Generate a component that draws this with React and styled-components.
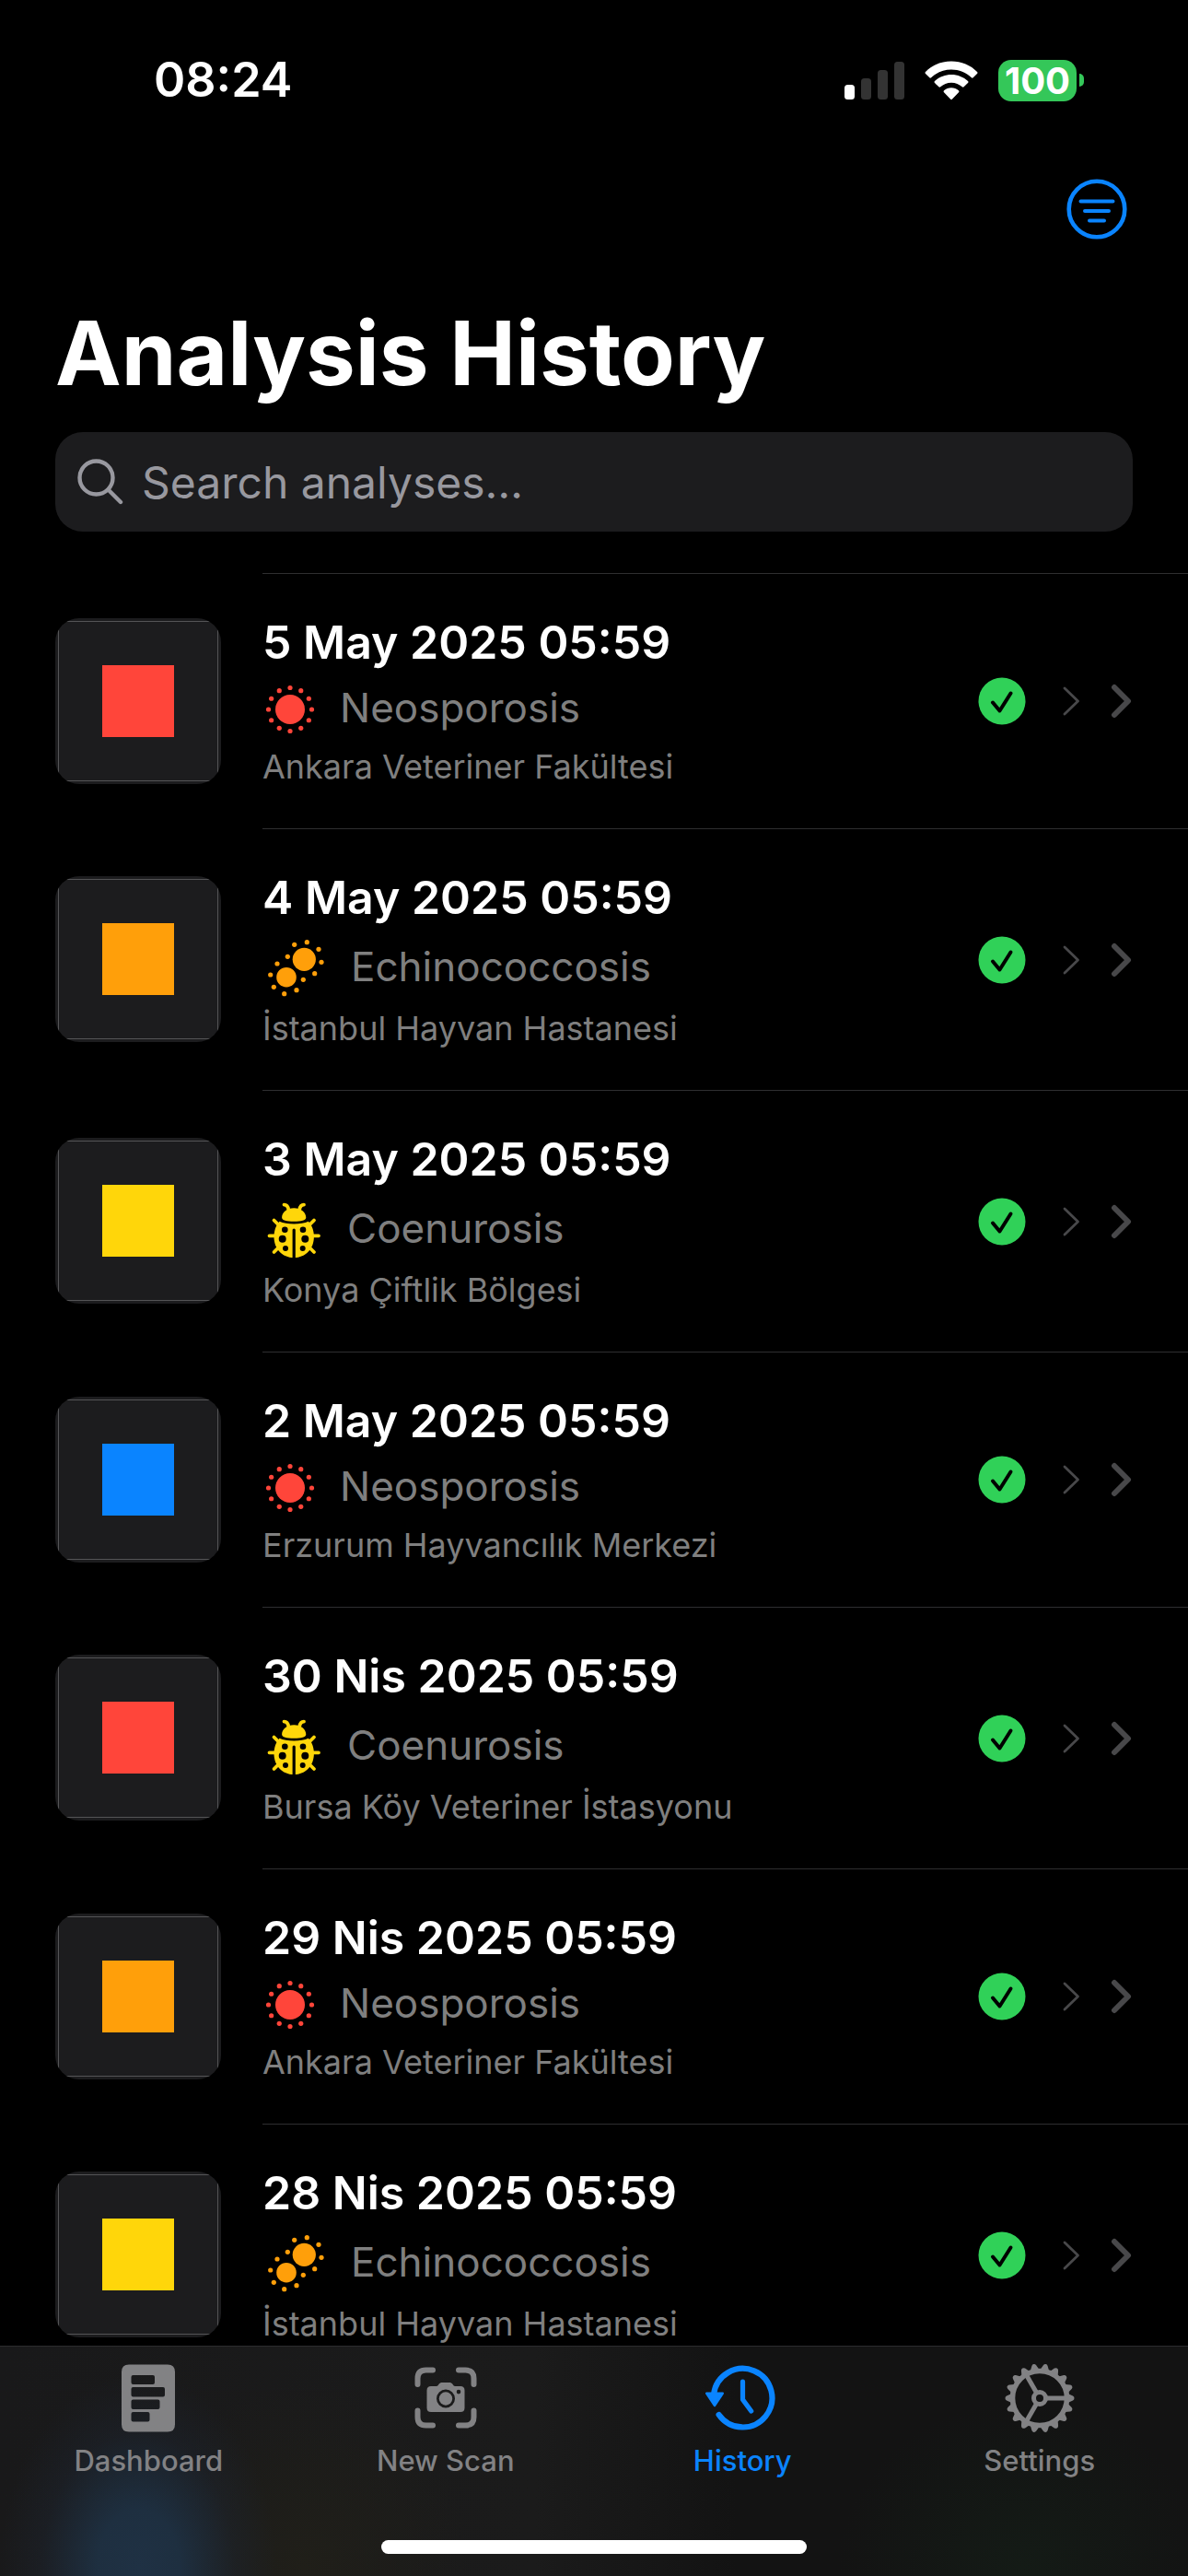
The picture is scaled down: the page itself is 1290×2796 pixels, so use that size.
import React from "react";
import styled, { createGlobalStyle } from "styled-components";

const Global = createGlobalStyle`
  *, *::before, *::after { box-sizing: border-box; }
  html, body { margin: 0; background: #000; }
  body { font-family: Inter, "Liberation Sans", sans-serif; color: #fff; }
  button, input { font: inherit; }
`;

const Screen = styled.div`
  display: flex;
  flex-direction: column;
  height: 100vh;
  background: #000;
  overflow: hidden;
`;

const StatusBar = styled.div`
  display: flex;
  justify-content: space-between;
  align-items: center;
  height: 174px;
  padding: 0 113px 0 167px;
`;

const Clock = styled.time`
  font-size: 52px;
  line-height: 60px;
  font-weight: 600;
`;

const StatusIcons = styled.div`
  display: flex;
  align-items: center;
  gap: 22px;
`;

const Battery = styled.div`
  display: flex;
  align-items: center;
  gap: 3px;
`;

const BatteryBody = styled.span`
  display: flex;
  align-items: center;
  justify-content: center;
  width: 85px;
  height: 45px;
  border-radius: 14px;
  background: #34c759;
  font-size: 40px;
  line-height: 45px;
  font-weight: 700;
`;

const BatteryTip = styled.span`
  width: 5px;
  height: 14px;
  border-radius: 0 5px 5px 0;
  background: #34c759;
`;

const Toolbar = styled.div`
  display: flex;
  justify-content: flex-end;
  padding: 20px 66px 0;
`;

const IconButton = styled.button`
  display: flex;
  padding: 0;
  border: 0;
  background: none;
  color: #0a84ff;
`;

const Title = styled.h1`
  margin: 63px 60px 0;
  font-size: 96px;
  line-height: 120px;
  font-weight: 700;
`;

const Search = styled.label`
  display: flex;
  align-items: center;
  gap: 20px;
  height: 108px;
  margin: 26px 60px 45px;
  padding: 0 24px;
  border-radius: 30px;
  background: #1c1c1e;
  color: #98989f;
`;

const SearchInput = styled.input`
  flex: 1;
  min-width: 0;
  height: 60px;
  padding: 0;
  border: 0;
  outline: 0;
  background: none;
  color: #fff;
  font-size: 48px;
  &::placeholder { color: #98989f; opacity: 1; }
`;

const List = styled.ul`
  flex: 1;
  min-height: 0;
  margin: 0;
  padding: 0;
  list-style: none;
  overflow-y: auto;
  scrollbar-width: none;
`;

const Row = styled.li`
  display: flex;
  align-items: center;
  gap: 45px;
  padding-left: 60px;
`;

const Thumb = styled.div`
  display: flex;
  flex: none;
  padding: 3px;
  width: 180px;
  height: 180px;
  border-radius: 26px;
  background: #1c1c1e;
  overflow: hidden;
`;

const ThumbFrame = styled.div`
  display: flex;
  flex: 1;
  align-items: center;
  justify-content: center;
  border: 1px solid #545456;
`;

const Swatch = styled.span`
  width: 78px;
  height: 78px;
  background: ${(p) => p.$color};
`;

const RowBody = styled.div`
  display: flex;
  flex: 1;
  min-width: 0;
  align-items: center;
  justify-content: space-between;
  padding: 43px 60px 43px 0;
  border-top: 1px solid #2e2e30;
`;

const Texts = styled.div`
  display: flex;
  flex-direction: column;
  gap: 10px;
`;

const DateLine = styled.h2`
  margin: 0;
  font-size: 50px;
  line-height: 62px;
  font-weight: 600;
`;

const Diagnosis = styled.div`
  display: flex;
  align-items: center;
  gap: 24px;
  font-size: 44px;
  line-height: 60px;
  color: #7f7f7f;
`;

const Place = styled.div`
  font-size: 36px;
  line-height: 48px;
  color: #7f7f7f;
`;

const Marks = styled.div`
  display: flex;
  align-items: center;
  gap: 33px;
`;

const TabBar = styled.nav`
  flex: none;
  display: flex;
  flex-direction: column;
  align-items: center;
  justify-content: space-between;
  height: 250px;
  padding-bottom: 24px;
  border-top: 1px solid #2c2c2e;
  background:
    radial-gradient(ellipse 150px 210px at 150px 240px, #1f3144 0%, #1e2f40 30%, rgba(30, 38, 50, 0.4) 70%, rgba(30, 38, 50, 0) 100%),
    radial-gradient(ellipse 180px 200px at 330px 240px, #201f19 0%, rgba(32, 31, 25, 0) 100%),
    radial-gradient(ellipse 200px 180px at 1110px 240px, #141b16 0%, rgba(20, 27, 22, 0) 100%),
    linear-gradient(90deg, #19191a 0%, #1b1b1b 45%, #131313 62%, #131313 100%);
`;

const Tabs = styled.div`
  display: grid;
  grid-template-columns: repeat(4, 1fr);
  width: 100%;
`;

const Tab = styled.a`
  display: flex;
  flex-direction: column;
  align-items: center;
  gap: 10px;
  padding-top: 18px;
  font-size: 31px;
  line-height: 40px;
  font-weight: 500;
  text-decoration: none;
  color: ${(p) => (p.$active ? "#0a84ff" : "#828284")};
`;

const HomeIndicator = styled.div`
  width: 462px;
  height: 15px;
  border-radius: 8px;
  background: #fff;
`;

const SignalIcon = () => (
  <svg width="65" height="43" viewBox="0 0 65 43" aria-hidden="true">
    <rect x="0" y="26" width="11" height="16" rx="3.5" fill="#fff" />
    <rect x="18" y="19" width="11" height="23" rx="3.5" fill="#333" />
    <rect x="36" y="10" width="11" height="32" rx="3.5" fill="#333" />
    <rect x="54" y="1" width="11" height="41" rx="3.5" fill="#333" />
  </svg>
);

const WifiIcon = () => (
  <svg width="58" height="43" viewBox="0 0 58 43" aria-hidden="true">
    <g fill="#fff">
      <path d="M29 0.500C40 0.500 50 4.700 57 12q1 1 0 2l-4.300 4.200q-0.900 0.900-1.800 0C45 12.700 37.300 9.500 29 9.500S13 12.700 7.100 18.200q-0.900 0.900-1.800 0L1 14q-1-1 0-2C8 4.700 18 0.500 29 0.500Z" />
      <path d="M29 15c7 0 13.300 2.700 18 7q1 1 0 2l-4.400 4.300q-0.900 0.800-1.800 0C37.600 25.400 33.500 23.700 29 23.700s-8.600 1.700-11.800 4.600q-0.900 0.800-1.800 0L11 24q-1-1 0-2c4.700-4.300 11-7 18-7Z" />
      <path d="M29 29.200c3 0 5.800 1.200 8 3.100q1 0.900 0 1.900l-7 7.200q-1 1-2 0l-7-7.200q-1-1 0-1.900c2.200-1.900 5-3.100 8-3.100Z" />
    </g>
  </svg>
);

const FilterIcon = () => (
  <svg width="66" height="66" viewBox="0 0 66 66" fill="none" stroke="currentColor" strokeLinecap="round" aria-hidden="true">
    <circle cx="33" cy="33" r="30.300" strokeWidth="4.600" />
    <path d="M15.500 24.500h35M20 35h26M25 45.500h16" strokeWidth="4" />
  </svg>
);

const SearchIcon = () => (
  <svg width="50" height="50" viewBox="0 0 50 50" fill="none" stroke="currentColor" strokeWidth="4.400" strokeLinecap="round" aria-hidden="true">
    <circle cx="20.500" cy="20.500" r="18" />
    <path d="M33.500 33.500L47 47" />
  </svg>
);

const SunGerm = () => (
  <svg width="60" height="60" viewBox="0 0 60 60" fill="#ff453a" aria-hidden="true">
    <circle cx="30" cy="32" r="16" />
    {Array.from({ length: 12 }, (_, i) => {
      const a = (i * Math.PI) / 6;
      return <circle key={i} cx={30 + 23.5 * Math.cos(a)} cy={32 + 23.5 * Math.sin(a)} r="2.600" />;
    })}
  </svg>
);

const TWIN_DOTS = [
  [48.3, 7.7], [34.7, 10.3], [61, 15.3], [27.3, 23.3], [64, 29.3], [16, 31],
  [56.7, 41.7], [8.7, 43], [44.3, 48.3], [12.3, 56.3], [37, 59.7], [23.7, 63.7],
];

const TwinGerm = () => (
  <svg width="72" height="67" viewBox="0 0 72 67" fill="#ff9f0a" aria-hidden="true">
    <circle cx="45.300" cy="26.300" r="12.600" />
    <circle cx="26" cy="45.700" r="10.800" />
    {TWIN_DOTS.map(([x, y]) => <circle key={x} cx={x} cy={y} r="2.600" />)}
  </svg>
);

const BUG_SPOTS = [
  [24.3, 35.7, 3.3], [44, 35.7, 3.3], [21.7, 45.7, 4], [46.3, 45.7, 4], [25, 56, 3], [43.7, 56, 3],
];

const Ladybug = () => (
  <svg width="68" height="67" viewBox="0 0 68 67" aria-hidden="true">
    <path
      d="M23.500 8.600Q27.500 8.600 28.300 14M45 8.600Q41 8.600 40.200 14M12.500 25.500L18 31M56 25.500L50.500 31M7.500 42.300H15M61 42.300H53.500M12.500 60L18 54.500M56 60L50.500 54.500"
      fill="none" stroke="#ffd60a" strokeWidth="3.800" strokeLinecap="round"
    />
    <path d="M34.200 12.200c7.500 0 13.100 4.600 13.100 10.300 0 3-5 4.200-13.100 4.200s-13.100-1.200-13.100-4.200c0-5.700 5.600-10.300 13.100-10.300Z" fill="#ffd60a" />
    <path d="M18.500 26.800c4 1.800 9.700 2.600 15.700 2.600s11.700-0.800 15.700-2.600c4 4.200 6 10.200 6 16.600 0 12.700-8.700 22.600-21.700 22.600S12.500 56.100 12.500 43.400c0-6.400 2-12.400 6-16.600Z" fill="#ffd60a" />
    <path d="M34.200 36v32" stroke="#000" strokeWidth="3.200" strokeLinecap="round" />
    {BUG_SPOTS.map(([x, y, r]) => <circle key={x} cx={x} cy={y} r={r} fill="#000" />)}
  </svg>
);

const CheckBadge = () => (
  <svg width="52" height="52" viewBox="0 0 52 52" aria-hidden="true">
    <circle cx="26" cy="26" r="25.500" fill="#30d158" />
    <path d="M16 27.500L23.500 36.500L35.500 17.500" fill="none" stroke="#000" strokeWidth="4" strokeLinecap="round" strokeLinejoin="round" />
  </svg>
);

const ThinChevron = () => (
  <svg width="26" height="34" viewBox="0 0 26 34" fill="none" stroke="#48484a" strokeWidth="2.800" strokeLinecap="round" strokeLinejoin="round" aria-hidden="true">
    <path d="M9 3L23.500 17L9 31" />
  </svg>
);

const BoldChevron = () => (
  <svg width="24" height="38" viewBox="0 0 24 38" fill="none" stroke="#48484a" strokeWidth="6" strokeLinecap="round" strokeLinejoin="round" aria-hidden="true">
    <path d="M4 4L19 19L4 34" />
  </svg>
);

const DashboardIcon = () => (
  <svg width="76" height="76" viewBox="0 0 76 76" aria-hidden="true">
    <path
      fillRule="evenodd" fill="currentColor"
      d="M17 1.500H59Q67 1.500 67 9.500V66.500Q67 74.500 59 74.500H17Q9 74.500 9 66.500V9.500Q9 1.500 17 1.500ZM21.500 13Q19.500 13 19.500 15V21Q19.500 23 21.500 23H43Q45 23 45 21V15Q45 13 43 13ZM21.500 26Q19.500 26 19.500 28V34.500Q19.500 36.500 21.500 36.500H54Q56 36.500 56 34.500V28Q56 26 54 26ZM21.500 39.500Q19.500 39.500 19.500 41.500V48Q19.500 50 21.500 50H48.500Q50.500 50 50.500 48V41.500Q50.500 39.500 48.500 39.500ZM21.500 53Q19.500 53 19.500 55V61.500Q19.500 63.500 21.500 63.500H37.500Q39.500 63.500 39.500 61.500V55Q39.500 53 37.500 53Z"
    />
  </svg>
);

const ScanIcon = () => (
  <svg width="76" height="76" viewBox="0 0 76 76" aria-hidden="true">
    <path
      d="M7.500 23V16.500Q7.500 7.500 16.500 7.500H24M52 7.500H59.500Q68.500 7.500 68.500 16.500V23M68.500 51.500V58.500Q68.500 67.500 59.500 67.500H52M24 67.500H16.500Q7.500 67.500 7.500 58.500V51.500"
      fill="none" stroke="currentColor" strokeWidth="6" strokeLinecap="round"
    />
    <path
      fillRule="evenodd" fill="currentColor"
      d="M22 25H28C30 25 30.500 21 33.500 21H42.500C45.500 21 46 25 48 25H54Q58.500 25 58.500 29.500V48.500Q58.500 53 54 53H22Q17.500 53 17.500 48.500V29.500Q17.500 25 22 25ZM38 28.500A10 10 0 1 0 38 48.500A10 10 0 1 0 38 28.500ZM52 28.800A2.300 2.300 0 1 0 52 33.400A2.300 2.300 0 1 0 52 28.800Z"
    />
    <circle cx="38" cy="38.500" r="7.200" fill="currentColor" />
  </svg>
);

const HistoryIcon = () => (
  <svg width="80" height="76" viewBox="0 0 80 76" fill="none" stroke="currentColor" strokeLinecap="round" strokeLinejoin="round" aria-hidden="true">
    <path d="M9 34A31.800 31.800 0 1 1 14.600 56" strokeWidth="6.200" />
    <path d="M40.500 20V39.500L49.700 52" strokeWidth="5.200" />
    <path d="M1.200 32.800H18.800L10 46Z" fill="currentColor" strokeWidth="2.400" />
  </svg>
);

const GearIcon = () => (
  <svg width="76" height="76" viewBox="0 0 76 76" fill="none" stroke="currentColor" aria-hidden="true">
    <circle cx="38" cy="38" r="29.500" strokeWidth="5.600" />
    <circle cx="38" cy="38" r="6.500" strokeWidth="5" />
    {[0, 120, 240].map((a) => (
      <path key={a} d="M45 38H66" strokeWidth="5" transform={`rotate(${a} 38 38)`} />
    ))}
    {Array.from({ length: 18 }, (_, i) => (
      <path key={i} d="M69 33.200L74 35.600Q75.500 36.400 75.500 38Q75.500 39.600 74 40.400L69 42.800Z" fill="currentColor" stroke="none" transform={`rotate(${i * 20} 38 38)`} />
    ))}
  </svg>
);

const DISEASES = {
  Neosporosis: SunGerm,
  Echinococcosis: TwinGerm,
  Coenurosis: Ladybug,
};

const ANALYSES = [
  { date: "5 May 2025 05:59", disease: "Neosporosis", place: "Ankara Veteriner Fakültesi", color: "#ff453a" },
  { date: "4 May 2025 05:59", disease: "Echinococcosis", place: "İstanbul Hayvan Hastanesi", color: "#ff9f0a" },
  { date: "3 May 2025 05:59", disease: "Coenurosis", place: "Konya Çiftlik Bölgesi", color: "#ffd60a" },
  { date: "2 May 2025 05:59", disease: "Neosporosis", place: "Erzurum Hayvancılık Merkezi", color: "#0a84ff" },
  { date: "30 Nis 2025 05:59", disease: "Coenurosis", place: "Bursa Köy Veteriner İstasyonu", color: "#ff453a" },
  { date: "29 Nis 2025 05:59", disease: "Neosporosis", place: "Ankara Veteriner Fakültesi", color: "#ff9f0a" },
  { date: "28 Nis 2025 05:59", disease: "Echinococcosis", place: "İstanbul Hayvan Hastanesi", color: "#ffd60a" },
];

const TABS = [
  { label: "Dashboard", Icon: DashboardIcon },
  { label: "New Scan", Icon: ScanIcon },
  { label: "History", Icon: HistoryIcon, active: true },
  { label: "Settings", Icon: GearIcon },
];

export default function App() {
  return (
    <Screen>
      <Global />
      <StatusBar>
        <Clock>08:24</Clock>
        <StatusIcons>
          <SignalIcon />
          <WifiIcon />
          <Battery>
            <BatteryBody>100</BatteryBody>
            <BatteryTip />
          </Battery>
        </StatusIcons>
      </StatusBar>
      <Toolbar>
        <IconButton type="button" aria-label="Filter"><FilterIcon /></IconButton>
      </Toolbar>
      <Title>Analysis History</Title>
      <Search>
        <SearchIcon />
        <SearchInput type="text" placeholder="Search analyses…" aria-label="Search analyses" />
      </Search>
      <List>
        {ANALYSES.map(({ date, disease, place, color }) => {
          const Germ = DISEASES[disease];
          return (
            <Row key={date}>
              <Thumb><ThumbFrame><Swatch $color={color} /></ThumbFrame></Thumb>
              <RowBody>
                <Texts>
                  <DateLine>{date}</DateLine>
                  <Diagnosis><Germ />{disease}</Diagnosis>
                  <Place>{place}</Place>
                </Texts>
                <Marks>
                  <CheckBadge />
                  <ThinChevron />
                  <BoldChevron />
                </Marks>
              </RowBody>
            </Row>
          );
        })}
      </List>
      <TabBar>
        <Tabs>
          {TABS.map(({ label, Icon, active }) => (
            <Tab key={label} href={`#${label}`} $active={active}>
              <Icon />
              {label}
            </Tab>
          ))}
        </Tabs>
        <HomeIndicator />
      </TabBar>
    </Screen>
  );
}
